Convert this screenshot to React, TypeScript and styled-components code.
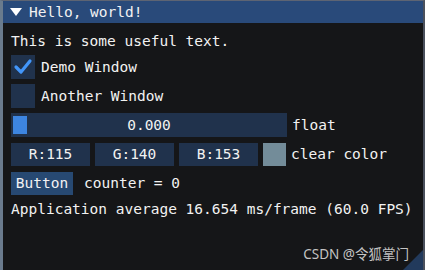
import React from "react";
import styled, { createGlobalStyle } from "styled-components";

const Global = createGlobalStyle`
  html, body { margin: 0; padding: 0; background: #151618; }
  body { font-family: "DejaVu Sans Mono", "Liberation Mono", monospace; }
`;

const Window = styled.div`
  position: relative;
  box-sizing: border-box;
  width: 425px;
  height: 270px;
  overflow: hidden;
  background: #151618;
  border-top: 1px solid #5d6473;
  border-left: 3px solid #6a7b8d;
  border-right: 2px solid #4a505c;
  color: #f2f2f2;
  font-size: 14.5px;
`;

const TitleBar = styled.div`
  height: 22px;
  background: #294a7a;
  display: flex;
  align-items: center;
  padding-left: 7px;
  gap: 7px;
  white-space: pre;
`;

const Content = styled.div`
  display: flex;
  flex-direction: column;
  gap: 5px;
  padding: 9px 0 0 8px;
`;

const TextRow = styled.div<{ $h?: number }>`
  height: ${(p) => p.$h ?? 18}px;
  line-height: ${(p) => p.$h ?? 18}px;
  white-space: pre;
`;

const Row = styled.div<{ $gap?: number }>`
  display: flex;
  align-items: center;
  gap: ${(p) => p.$gap ?? 5}px;
  height: 24px;
  white-space: pre;
`;

const CheckBox = styled.div`
  width: 24px;
  height: 24px;
  background: #20324c;
  display: flex;
  align-items: center;
  justify-content: center;
`;

const Frame = styled.div<{ $w: number; $h?: number }>`
  position: relative;
  box-sizing: border-box;
  width: ${(p) => p.$w}px;
  height: ${(p) => p.$h ?? 23}px;
  background: #20324c;
  display: flex;
  align-items: center;
  justify-content: center;
  line-height: 1;
`;

const Grab = styled.div`
  position: absolute;
  left: 2px;
  top: 3px;
  width: 14px;
  height: 18px;
  background: #3d85e0;
`;

const Swatch = styled.div`
  width: 23px;
  height: 23px;
  background: #738c99;
`;

const Button = styled.div`
  width: 62px;
  height: 23px;
  background: #274972;
  display: flex;
  align-items: center;
  justify-content: center;
`;

const Label = styled.span<{ $ml?: number }>`
  margin-left: ${(p) => p.$ml ?? 0}px;
`;

const Watermark = styled.div`
  position: absolute;
  right: 14px;
  bottom: 7px;
  font-family: "Noto Sans", "Noto Sans CJK SC", sans-serif;
  font-size: 13.5px;
  color: #c4c4c4;
`;

const Grip = styled.svg`
  position: absolute;
  right: 0;
  bottom: 0;
`;

export default function App() {
  return (
    <>
      <Global />
      <Window>
        <TitleBar>
          <svg width="12" height="10" viewBox="0 0 12 10">
            <polygon points="0,1 12,1 6,9" fill="#ffffff" />
          </svg>
          <span>Hello, world!</span>
        </TitleBar>
        <Content>
          <TextRow>This is some useful text.</TextRow>
          <Row $gap={6}>
            <CheckBox>
              <svg width="20" height="20" viewBox="0 0 20 20">
                <polyline
                  points="3,10 8,15 17,4"
                  fill="none"
                  stroke="#4296fa"
                  strokeWidth="3.2"
                  strokeLinecap="round"
                  strokeLinejoin="round"
                />
              </svg>
            </CheckBox>
            <span>Demo Window</span>
          </Row>
          <Row $gap={6}>
            <CheckBox />
            <span>Another Window</span>
          </Row>
          <Row>
            <Frame $w={276} $h={24}>
              <Grab />
              0.000
            </Frame>
            <span>float</span>
          </Row>
          <Row>
            <Frame $w={79}>R:115</Frame>
            <Frame $w={79}>G:140</Frame>
            <Frame $w={79}>B:153</Frame>
            <Swatch />
            <span>clear color</span>
          </Row>
          <Row $gap={11}>
            <Button>Button</Button>
            <span>counter = 0</span>
          </Row>
          <TextRow $h={19}>Application average 16.654 ms/frame (60.0 FPS)</TextRow>
        </Content>
        <Watermark>CSDN @令狐掌门</Watermark>
        <Grip width="20" height="20" viewBox="0 0 20 20">
          <polygon points="20,0 20,20 0,20" fill="#223a5c" />
        </Grip>
      </Window>
    </>
  );
}
